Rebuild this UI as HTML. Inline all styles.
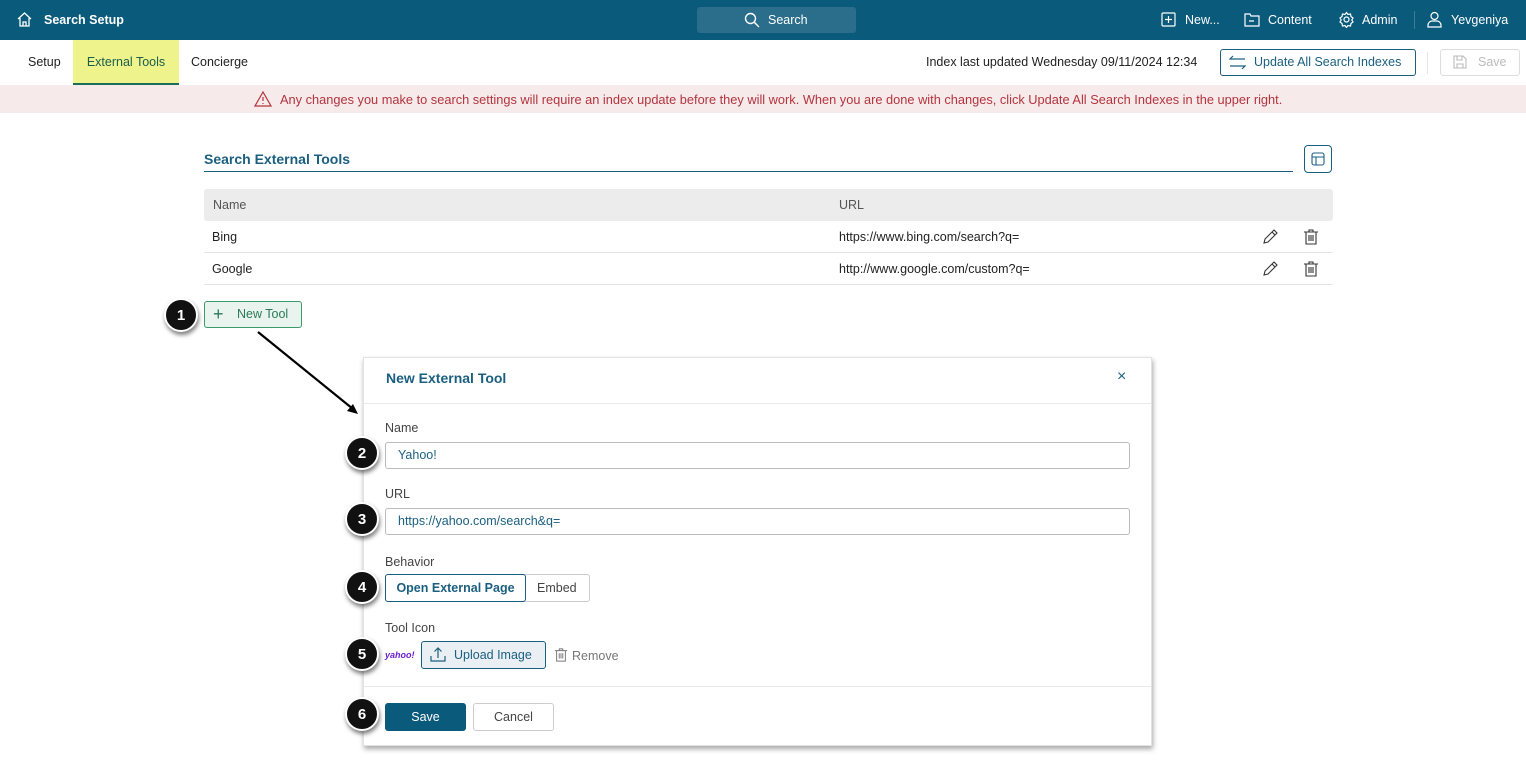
<!DOCTYPE html>
<html><head><meta charset="utf-8"><style>
*{box-sizing:border-box;margin:0;padding:0}
body{width:1526px;height:762px;overflow:hidden;background:#fff;font-family:"Liberation Sans",sans-serif;font-size:12.5px;color:#222;position:relative}
.abs{position:absolute}
.top{left:0;top:0;width:1526px;height:40px;background:#0a5a7c;color:#fff}
.top span{position:absolute;top:13px;font-size:12.5px}
.badge{position:absolute;width:34px;height:34px;border-radius:50%;background:#111;border:2px solid #fff;box-shadow:1px 3px 4px rgba(0,0,0,.5);color:#fff;font-weight:bold;font-size:15px;text-align:center;line-height:32px}
.inp{position:absolute;left:385px;width:745px;height:27px;border:1px solid #bbb;border-radius:3px;padding-left:12px;line-height:25px;color:#1b5f80}
.lbl{position:absolute;left:385px;color:#444}
.row{position:absolute;left:204px;width:1129px;height:32px;border-bottom:1px solid #e4e4e4;line-height:32px}
</style></head><body>
<div class="abs top">
<svg class="abs" style="left:16px;top:11px" width="17" height="17" viewBox="0 0 17 17" fill="none" stroke="#fff" stroke-width="1.3"><path d="M2 8L8.5 2 15 8M4 7v8h9V7M7 15v-4h3v4"/></svg>
<span style="left:44px;font-weight:bold">Search Setup</span>
<div class="abs" style="left:697px;top:7px;width:159px;height:26px;background:#2a6e8c;border-radius:3px"></div>
<svg class="abs" style="left:744px;top:12px" width="16" height="16" viewBox="0 0 16 16" fill="none" stroke="#fff" stroke-width="1.4"><circle cx="6.5" cy="6.5" r="5"/><path d="M10 10l5 5"/></svg>
<span style="left:768px">Search</span>
<svg class="abs" style="left:1161px;top:12px" width="15" height="15" viewBox="0 0 15 15" fill="none" stroke="#fff" stroke-width="1.2"><rect x="1" y="1" width="13" height="13" rx="1"/><path d="M7.5 4v7M4 7.5h7"/></svg>
<span style="left:1185px">New...</span>
<svg class="abs" style="left:1244px;top:12px" width="16" height="15" viewBox="0 0 16 15" fill="none" stroke="#fff" stroke-width="1.2"><path d="M1 2h5l1 2h8v10H1z M5 9h5"/></svg>
<span style="left:1268px">Content</span>
<svg class="abs" style="left:1338px;top:11px" width="17" height="17" viewBox="0 0 17 17" fill="none" stroke="#fff" stroke-width="1.2"><circle cx="8.5" cy="8.5" r="2.5"/><path d="M8.5 1.5l1.5 2 2.5-.5.5 2.5 2 1.5-1.2 2 1.2 2-2 1.5-.5 2.5-2.5-.5-1.5 2-1.5-2-2.5.5-.5-2.5-2-1.5 1.2-2-1.2-2 2-1.5.5-2.5 2.5.5z"/></svg>
<span style="left:1362px">Admin</span>
<div class="abs" style="left:1414px;top:11px;width:1px;height:18px;background:#3d7d99"></div>
<svg class="abs" style="left:1427px;top:11px" width="15" height="17" viewBox="0 0 15 17" fill="none" stroke="#fff" stroke-width="1.2"><circle cx="7.5" cy="5" r="3.5"/><path d="M1 16v-2c0-2 2-4 4-4h5c2 0 4 2 4 4v2z"/></svg>
<span style="left:1451px">Yevgeniya</span>
</div>
<div class="abs" style="left:28px;top:55px">Setup</div>
<div class="abs" style="left:73px;top:40px;width:106px;height:45px;background:#eef38c;border-bottom:2px solid #1b6e5a;color:#1b5e4e;text-align:center;line-height:44px">External Tools</div>
<div class="abs" style="left:191px;top:55px">Concierge</div>
<div class="abs" style="left:926px;top:55px">Index last updated Wednesday 09/11/2024 12:34</div>
<div class="abs" style="left:1220px;top:49px;width:196px;height:27px;border:1px solid #1b5f80;border-radius:3px;color:#1b5f80;line-height:25px;padding-left:33px">Update All Search Indexes</div>
<svg class="abs" style="left:1229px;top:55px" width="17" height="15" viewBox="0 0 17 15" fill="none" stroke="#1b5f80" stroke-width="1.2"><path d="M16 4H1l3-3M1 11h15l-3 3"/></svg>
<div class="abs" style="left:1427px;top:52px;width:1px;height:22px;background:#e6e6e6"></div>
<div class="abs" style="left:1440px;top:49px;width:80px;height:27px;border:1px solid #ddd;border-radius:3px;color:#bbb;line-height:25px;padding-left:37px">Save</div>
<svg class="abs" style="left:1453px;top:55px" width="14" height="14" viewBox="0 0 14 14" fill="none" stroke="#bbb" stroke-width="1.1"><path d="M1 1h9l3 3v9H1z M4 1v4h5V1 M4 13V9h6v4"/></svg>
<div class="abs" style="left:0;top:85px;width:1526px;height:28px;background:#f6eaea;color:#b3343e;line-height:29px;padding-left:280px;font-size:12.8px">Any changes you make to search settings will require an index update before they will work. When you are done with changes, click Update All Search Indexes in the upper right.</div>
<svg class="abs" style="left:254px;top:91px" width="18" height="16" viewBox="0 0 18 16" fill="none" stroke="#b3343e" stroke-width="1.2"><path d="M9 1L1 15h16z M9 6v4M9 12v1"/></svg>

<div class="abs" style="left:204px;top:151px;font-size:14px;font-weight:bold;color:#1b5f80">Search External Tools</div>
<div class="abs" style="left:204px;top:171px;width:1089px;height:1px;background:#1b5f80"></div>
<div class="abs" style="left:1304px;top:145px;width:28px;height:28px;border:1px solid #1b5f80;border-radius:4px"></div>
<svg class="abs" style="left:1311px;top:152px" width="14" height="14" viewBox="0 0 14 14" fill="none" stroke="#1b5f80" stroke-width="1.1"><rect x="1" y="1" width="12" height="12" rx="2"/><path d="M1 5h12M5 5v8"/></svg>
<div class="abs" style="left:204px;top:189px;width:1129px;height:32px;background:#ececec;border-radius:3px;color:#555;line-height:32px"><span class="abs" style="left:9px">Name</span><span class="abs" style="left:635px">URL</span></div>
<div class="row" style="top:221px"><span class="abs" style="left:8px">Bing</span><span class="abs" style="left:635px">https://www.bing.com/search?q=</span></div>
<div class="row" style="top:253px"><span class="abs" style="left:8px">Google</span><span class="abs" style="left:635px">http://www.google.com/custom?q=</span></div>
<svg class="abs" style="left:1262px;top:229px" width="16" height="16" viewBox="0 0 16 16" fill="none" stroke="#333" stroke-width="1.1"><path d="M2 14l1-4 9-9 3 3-9 9z M10 3l3 3"/></svg>
<svg class="abs" style="left:1262px;top:261px" width="16" height="16" viewBox="0 0 16 16" fill="none" stroke="#333" stroke-width="1.1"><path d="M2 14l1-4 9-9 3 3-9 9z M10 3l3 3"/></svg>
<svg class="abs" style="left:1303px;top:229px" width="16" height="16" viewBox="0 0 16 16" fill="none" stroke="#333" stroke-width="1.1"><path d="M1 3h14M6 3V1h4v2M3 3v12h10V3M6 6v6M8 6v6M10 6v6"/></svg>
<svg class="abs" style="left:1303px;top:261px" width="16" height="16" viewBox="0 0 16 16" fill="none" stroke="#333" stroke-width="1.1"><path d="M1 3h14M6 3V1h4v2M3 3v12h10V3M6 6v6M8 6v6M10 6v6"/></svg>

<div class="abs" style="left:204px;top:301px;width:98px;height:27px;border:1px solid #3a9a6a;border-radius:3px;background:#eaf4ef;color:#2a7a58;line-height:25px;padding-left:32px">New Tool</div>
<div class="abs" style="left:213px;top:304px;color:#2a7a58;font-size:18px">+</div>
<div class="badge" style="left:164px;top:298px">1</div>
<svg class="abs" style="left:250px;top:325px" width="120" height="100"><path d="M8 7L103 84" stroke="#000" stroke-width="2.2"/><path d="M108 89l-11-3 6-7z" fill="#000"/></svg>

<div class="abs" style="left:363px;top:357px;width:789px;height:389px;background:#fff;border:1px solid #e2e2e2;box-shadow:1px 3px 5px rgba(0,0,0,.35)"></div>
<div class="abs" style="left:386px;top:370px;font-size:14px;font-weight:bold;color:#1b5f80">New External Tool</div>
<div class="abs" style="left:1117px;top:368px;color:#1b5f80;font-size:16px">×</div>
<div class="abs" style="left:364px;top:403px;width:787px;height:1px;background:#eaeaea"></div>
<div class="lbl" style="top:421px">Name</div>
<div class="inp" style="top:442px">Yahoo!</div>
<div class="lbl" style="top:487px">URL</div>
<div class="inp" style="top:508px">https://yahoo.com/search&amp;q=</div>
<div class="lbl" style="top:555px">Behavior</div>
<div class="abs" style="left:385px;top:574px;width:205px;height:28px;border:1px solid #ccc;border-radius:3px"></div>
<div class="abs" style="left:385px;top:574px;width:141px;height:28px;border:1px solid #1b5f80;border-radius:3px;color:#1b5f80;font-weight:bold;line-height:26px;text-align:center">Open External Page</div>
<div class="abs" style="left:537px;top:581px;color:#444">Embed</div>
<div class="lbl" style="top:621px">Tool Icon</div>
<div class="abs" style="left:385px;top:650px;color:#6b1fd1;font-weight:bold;font-size:9px;font-style:italic">yahoo!</div>
<div class="abs" style="left:421px;top:641px;width:125px;height:28px;border:1px solid #1b5f80;border-radius:3px;background:#e9eff3;color:#1b5f80;line-height:26px;padding-left:32px">Upload Image</div>
<svg class="abs" style="left:430px;top:647px" width="16" height="15" viewBox="0 0 16 15" fill="none" stroke="#1b5f80" stroke-width="1.2"><path d="M1 9v5h14V9M8 11V1M4.5 4.5L8 1l3.5 3.5"/></svg>
<svg class="abs" style="left:554px;top:647px" width="14" height="16" viewBox="0 0 16 16" fill="none" stroke="#777" stroke-width="1.1"><path d="M1 3h14M6 3V1h4v2M3 3v12h10V3M6 6v6M8 6v6M10 6v6"/></svg>
<div class="abs" style="left:572px;top:649px;color:#777">Remove</div>
<div class="abs" style="left:364px;top:686px;width:787px;height:1px;background:#eaeaea"></div>
<div class="abs" style="left:385px;top:703px;width:81px;height:28px;background:#0a5a7c;border-radius:3px;color:#fff;text-align:center;line-height:28px">Save</div>
<div class="abs" style="left:473px;top:703px;width:81px;height:28px;border:1px solid #ccc;border-radius:3px;color:#444;text-align:center;line-height:26px">Cancel</div>
<div class="badge" style="left:345px;top:436px">2</div>
<div class="badge" style="left:345px;top:502px">3</div>
<div class="badge" style="left:345px;top:570px">4</div>
<div class="badge" style="left:345px;top:637px">5</div>
<div class="badge" style="left:345px;top:697px">6</div>
</body></html>
